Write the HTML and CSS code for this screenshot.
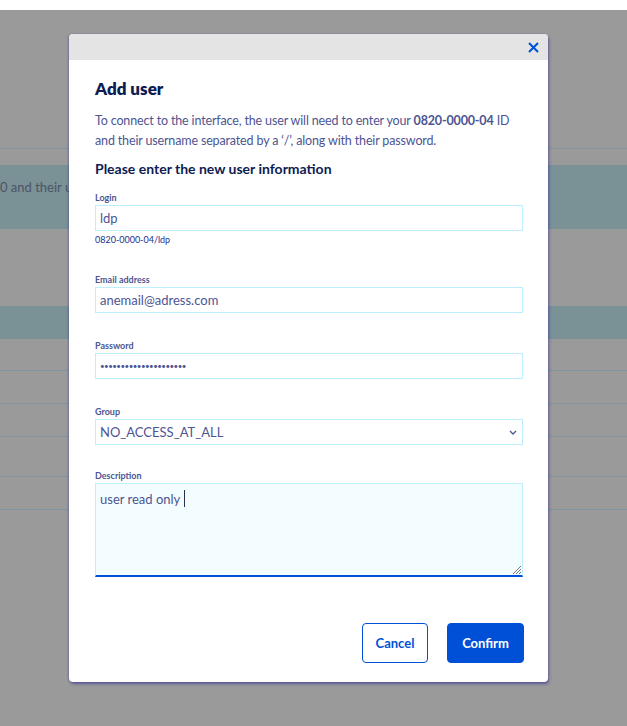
FILE: index.html
```html
<!DOCTYPE html>
<html lang="en">
<head>
<meta charset="utf-8">
<title>Add user</title>
<link rel="stylesheet" href="styles.css">
</head>
<body>
<div class="page">
  <div class="shade">
    <div class="row-line first"></div>
    <div class="band tall"><span class="band-text">0 and their us</span></div>
    <div class="band short"></div>
    <div class="row-line"></div>
    <div class="row-line"></div>
    <div class="row-line"></div>
    <div class="row-line wide"></div>
    <div class="row-line"></div>
  </div>
</div>

<div class="modal" role="dialog">
  <div class="modal-head">
    <button class="close" aria-label="Close">
      <svg width="11" height="11" viewBox="0 0 11 11"><path d="M1 1 L10 10 M10 1 L1 10" stroke="#0050d7" stroke-width="2" fill="none"/></svg>
    </button>
  </div>
  <div class="modal-body">
    <h2 class="title">Add user</h2>
    <p class="intro">To connect to the interface, the user will need to enter your <b>0820-0000-04</b> ID and their username separated by a ‘/’, along with their password.</p>
    <h3 class="subtitle">Please enter the new user information</h3>

    <div class="field first">
      <label class="label">Login</label>
      <div class="input">ldp</div>
      <div class="helper">0820-0000-04/ldp</div>
    </div>
    <div class="field after-helper">
      <label class="label">Email address</label>
      <div class="input">anemail@adress.com</div>
    </div>
    <div class="field">
      <label class="label">Password</label>
      <div class="input"><span class="dots">•••••••••••••••••••••</span></div>
    </div>
    <div class="field">
      <label class="label">Group</label>
      <div class="input select">
        <span>NO_ACCESS_AT_ALL</span>
        <svg width="8" height="5" viewBox="0 0 8 5"><path d="M1 1 L4 4 L7 1" stroke="#4d5592" stroke-width="1.3" fill="none"/></svg>
      </div>
    </div>
    <div class="field last">
      <label class="label">Description</label>
      <div class="textarea">
        <span>user read only</span><span class="caret"></span>
        <svg class="grip" width="9" height="9" viewBox="0 0 9 9"><path d="M9 1 L1 9 M9 4 L4 9 M9 7 L7 9" stroke="#777" stroke-width="1" fill="none"/></svg>
      </div>
    </div>

    <div class="actions">
      <button class="btn ghost">Cancel</button>
      <button class="btn primary">Confirm</button>
    </div>
  </div>
</div>
</body>
</html>
```
FILE: styles.css
```css
html, body {
  margin: 0;
  padding: 0;
}
body {
  background: #fff;
  font-family: "Lato", "Noto Sans", sans-serif;
  width: 627px;
  height: 726px;
  overflow: hidden;
  position: relative;
}
.page {
  padding-top: 10px;
}
.shade {
  background: #9a9a9a;
  height: 716px;
  display: flex;
  flex-direction: column;
}
.row-line {
  height: 1px;
  background: #7d96a0;
  margin-top: 32px;
  flex: none;
}
.row-line.first {
  margin-top: 138px;
}
.row-line.wide {
  margin-top: 39px;
}
.band {
  background: #7a9196;
  flex: none;
}
.band.tall {
  margin-top: 16px;
  height: 64px;
}
.band.short {
  margin-top: 77px;
  height: 33px;
  margin-bottom: -1px;
}
.band-text {
  display: block;
  margin-top: 13px;
  font-size: 13px;
  line-height: 18px;
  color: #4d5466;
  white-space: nowrap;
}

/* Modal */
.modal {
  position: absolute;
  top: 34px;
  left: 69px;
  width: 479px;
  background: #fff;
  border-radius: 4px;
  overflow: hidden;
  box-shadow: 1px 2px 3px rgba(40, 40, 150, 0.55), -1px 0 2px rgba(40, 40, 150, 0.25);
}
.modal-head {
  height: 26px;
  background: #e4e4e4;
  display: flex;
  justify-content: flex-end;
  align-items: center;
  padding-right: 9px;
}
.close {
  border: 0;
  background: none;
  padding: 0;
  width: 11px;
  height: 11px;
  display: flex;
  margin-top: 1px;
}
.modal-body {
  padding: 18px 25px 19px 26px;
}
.title {
  margin: 0;
  font-size: 17px;
  line-height: 22px;
  font-weight: 800;
  color: #0d1c52;
}
.intro {
  margin: 11px 0 0;
  font-size: 12.5px;
  letter-spacing: -0.15px;
  line-height: 20px;
  color: #4d5592;
}
.intro b {
  font-weight: 700;
}
.subtitle {
  margin: 9px 0 0;
  font-size: 14px;
  line-height: 18px;
  font-weight: 700;
  color: #0d1c52;
}
.field {
  display: flex;
  flex-direction: column;
  margin-top: 27px;
}
.field.first {
  margin-top: 14px;
}
.field.after-helper {
  margin-top: 28px;
}
.field.last {
  margin-top: 25px;
}
.label {
  font-size: 9px;
  line-height: 12px;
  font-weight: 700;
  color: #4d5592;
  margin-bottom: 1px;
}
.input {
  height: 26px;
  box-sizing: border-box;
  border: 1px solid #bdf0fc;
  padding: 0 4px;
  display: flex;
  align-items: center;
  font-size: 13px;
  color: #4d5592;
}
.dots {
  font-size: 8px;
  letter-spacing: -0.55px;
  color: #4d5592;
}
.select {
  justify-content: space-between;
  padding-right: 5px;
}
.helper {
  margin-top: 3px;
  font-size: 9px;
  line-height: 12px;
  color: #232f8f;
}
.textarea {
  position: relative;
  height: 94px;
  box-sizing: border-box;
  border: 1px solid #bdf0fc;
  border-bottom: 2px solid #0050d7;
  background: #f3fcff;
  padding: 6px 4px;
  font-size: 13px;
  line-height: 18px;
  color: #4d5592;
  display: flex;
  align-items: flex-start;
}
.caret {
  display: inline-block;
  width: 1px;
  height: 17px;
  background: #2a2f55;
  margin-left: 4px;
}
.grip {
  position: absolute;
  right: 1px;
  bottom: 1px;
}
.actions {
  display: flex;
  justify-content: flex-end;
  gap: 19px;
  margin-top: 46px;
  margin-right: -1px;
}
.btn {
  height: 40px;
  box-sizing: border-box;
  border-radius: 4px;
  font-family: inherit;
  font-size: 13px;
  font-weight: 700;
  padding: 0;
  cursor: pointer;
}
.ghost {
  width: 66px;
  background: #fff;
  border: 1px solid #0050d7;
  color: #0050d7;
}
.primary {
  width: 77px;
  background: #0050d7;
  border: 1px solid #0050d7;
  color: #fff;
}
```
